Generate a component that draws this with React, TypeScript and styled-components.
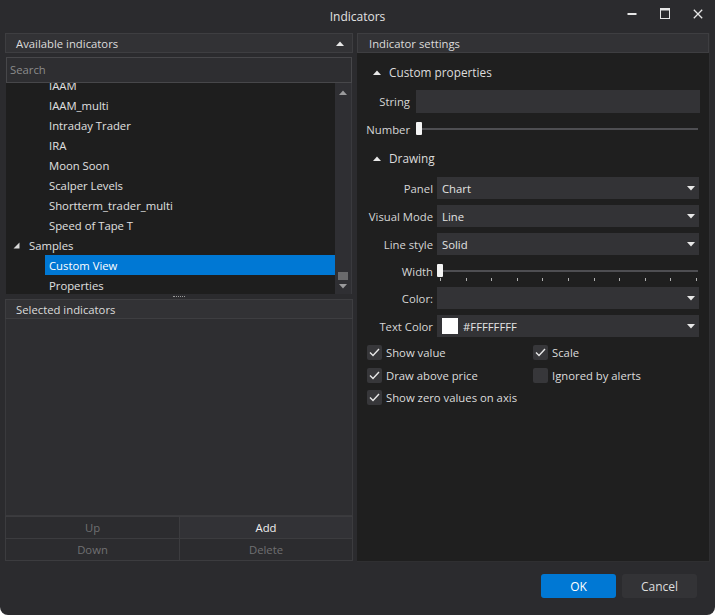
import React from "react";
import styled, { createGlobalStyle } from "styled-components";

const Global = createGlobalStyle`
  html, body { margin: 0; padding: 0; background: #ffffff; }
  body { font-family: "Open Sans", "Noto Sans", sans-serif; }
  * { box-sizing: border-box; }
`;

const Window = styled.div`
  width: 715px;
  height: 615px;
  background: #2b2b2e;
  display: flex;
  flex-direction: column;
  border-radius: 0 0 8px 8px;
  overflow: hidden;
  color: #dcdcdc;
  font-size: 11.3px;
  font-family: "Open Sans", "Noto Sans", sans-serif;
`;

const TitleBar = styled.div`
  height: 33px;
  flex: none;
  display: grid;
  grid-template-columns: 1fr auto 1fr;
  align-items: center;
`;

const Title = styled.div`
  grid-column: 2;
  font-size: 12px;
  color: #e2e2e2;
`;

const Controls = styled.div`
  grid-column: 3;
  justify-self: end;
  display: flex;
  padding-right: 1px;
  height: 33px;
`;

const CtrlButton = styled.div`
  width: 33px;
  height: 27px;
  display: flex;
  align-items: center;
  justify-content: center;
`;

const Body = styled.div`
  height: 529px;
  flex: none;
  display: flex;
  gap: 4px;
  padding: 0 5px;
`;

const LeftPane = styled.div`
  width: 348px;
  display: flex;
  flex-direction: column;
`;

const PanelHeader = styled.div<{ $pl?: number }>`
  height: 20px;
  flex: none;
  background: #323235;
  border: 1px solid #3e3e41;
  display: flex;
  align-items: center;
  justify-content: space-between;
  padding: 0 8px 0 ${(p) => p.$pl ?? 10}px;
  color: #dcdcdc;
`;

const SearchBox = styled.div`
  margin: 4px 1px 0;
  height: 26px;
  flex: none;
  background: #2e2e31;
  border: 1px solid #47474a;
  display: flex;
  align-items: center;
  padding: 0 0 2px 3px;
  color: #8c8c8c;
`;

const Tree = styled.div`
  margin: 0 1px;
  height: 211px;
  flex: none;
  display: flex;
  background: #1e1e1e;
`;

const TreeViewport = styled.div`
  flex: 1;
  overflow: hidden;
`;

const TreeInner = styled.div`
  margin-top: -8px;
`;

const Row = styled.div<{ $level: number }>`
  height: 20px;
  display: flex;
  align-items: stretch;
  padding-left: ${(p) => p.$level * 20 + 5}px;
`;

const Expander = styled.div`
  width: 14px;
  display: flex;
  align-items: center;
  padding-left: 2px;
`;

const RowLabel = styled.div<{ $selected?: boolean }>`
  flex: 1;
  display: flex;
  align-items: center;
  padding-left: 4px;
  color: ${(p) => (p.$selected ? "#ffffff" : "#e0e0e0")};
  background: ${(p) => (p.$selected ? "#0078d4" : "transparent")};
`;

const ScrollBar = styled.div`
  width: 17px;
  background: #2f2f33;
  border-right: 1px solid #3a3a3e;
  display: flex;
  flex-direction: column;
  align-items: center;
  padding: 7px 0 5px;
`;

const ScrollTrack = styled.div`
  flex: 1;
  display: flex;
  flex-direction: column;
  justify-content: flex-end;
  padding-bottom: 4px;
`;

const ScrollThumb = styled.div`
  width: 10px;
  height: 8px;
  background: #6a6a6c;
`;

const Splitter = styled.div`
  height: 5px;
  flex: none;
  display: flex;
  align-items: center;
  justify-content: center;
`;

const Grip = styled.div`
  width: 12px;
  border-top: 1px dotted #9a9a9a;
`;

const SelectedList = styled.div`
  flex: 1;
  background: #2e2e31;
  border: 1px solid #3a3a3d;
  border-top: none;
`;

const ButtonGrid = styled.div`
  display: grid;
  grid-template-columns: 173px 1fr;
  grid-auto-rows: 22px;
  border: 1px solid #3c3c3f;
  border-top: none;
  margin-bottom: 1px;
`;

const GridButton = styled.div<{ $enabled?: boolean }>`
  display: flex;
  align-items: center;
  justify-content: center;
  border-top: 1px solid #3c3c3f;
  border-left: 1px solid #3c3c3f;
  color: ${(p) => (p.$enabled ? "#f0f0f0" : "#707072")};
  background: ${(p) => (p.$enabled ? "#323236" : "#2c2c2f")};
  &:nth-child(odd) { border-left: none; }
`;

const RightPane = styled.div`
  width: 353px;
  display: flex;
  flex-direction: column;
  background: #1f1f1f;
  border-right: 1px solid #2f2f31;
  border-bottom: 1px solid #2f2f31;
`;

const Content = styled.div`
  display: flex;
  flex-direction: column;
  padding: 0 10px 0 10px;
`;

const SectionHeader = styled.div<{ $mt: number }>`
  margin-top: ${(p) => p.$mt}px;
  height: 20px;
  display: flex;
  align-items: center;
  gap: 8px;
  padding-left: 6px;
  color: #dcdcdc;
  font-size: 11.8px;
`;

const FormGrid = styled.div<{ $label: number; $gap: number; $mt: number }>`
  margin-top: ${(p) => p.$mt}px;
  display: grid;
  grid-template-columns: ${(p) => p.$label}px 1fr;
  column-gap: ${(p) => p.$gap}px;
  row-gap: 6px;
`;

const Label = styled.div`
  justify-self: end;
  align-self: center;
  white-space: nowrap;
  color: #d6d6d6;
`;

const TextInput = styled.div`
  height: 23px;
  background: #333336;
  margin-right: -1px;
`;

const Select = styled.div`
  height: 22px;
  background: #333336;
  display: flex;
  align-items: center;
  padding: 0 4px 0 5px;
  gap: 5px;
  color: #e4e4e4;
`;

const SelectValue = styled.div`
  flex: 1;
  display: flex;
  align-items: center;
  gap: 5px;
`;

const Swatch = styled.div`
  width: 16px;
  height: 16px;
  background: #ffffff;
`;

const SliderWrap = styled.div`
  height: 20px;
  display: flex;
  flex-direction: column;
  padding-top: 3px;
`;

const SliderLine = styled.div`
  display: flex;
  align-items: center;
  height: 13px;
  padding-right: 1px;
`;

const Thumb = styled.div`
  width: 6px;
  height: 13px;
  background: #f4f4f4;
  border-radius: 1px;
`;

const Track = styled.div`
  flex: 1;
  height: 2px;
  background: #4e4e52;
`;

const Ticks = styled.div`
  display: flex;
  justify-content: space-between;
  padding: 1px 2px 0 3px;
`;

const Tick = styled.div`
  width: 1px;
  height: 3px;
  background: #b0b0b0;
`;

const CheckGrid = styled.div`
  margin-top: 8px;
  display: grid;
  grid-template-columns: 166px 1fr;
  grid-auto-rows: 15px;
  row-gap: 7.5px;
`;

const CheckItem = styled.div`
  display: flex;
  align-items: center;
  gap: 4px;
  color: #dcdcdc;
`;

const Box = styled.div`
  width: 15px;
  height: 15px;
  background: #37373a;
  border-radius: 2px;
  display: flex;
  align-items: center;
  justify-content: center;
`;

const Footer = styled.div`
  flex: 1;
  display: flex;
  justify-content: flex-end;
  align-items: flex-start;
  gap: 6px;
  padding: 12px 18px 0 0;
`;

const DialogButton = styled.div<{ $primary?: boolean }>`
  width: 75px;
  height: 24px;
  border-radius: 3px;
  display: flex;
  align-items: center;
  justify-content: center;
  font-size: 12px;
  background: ${(p) => (p.$primary ? "#0078d4" : "#333336")};
  color: ${(p) => (p.$primary ? "#ffffff" : "#dedede")};
`;

const CaretUp = ({ color = "#e8e8e8" }: { color?: string }) => (
  <svg width="8" height="5" viewBox="0 0 8 5">
    <polygon points="0,5 4,0.5 8,5" fill={color} />
  </svg>
);

const CaretDown = ({ color = "#e8e8e8" }: { color?: string }) => (
  <svg width="8" height="5" viewBox="0 0 8 5">
    <polygon points="0,0 8,0 4,4.5" fill={color} />
  </svg>
);

const Expanded = () => (
  <svg width="7" height="7" viewBox="0 0 7 7">
    <polygon points="6.5,0.5 6.5,6.5 0.5,6.5" fill="#d8d8d8" />
  </svg>
);

const Check = () => (
  <svg width="11" height="9" viewBox="0 0 11 9">
    <polyline points="1,4.5 4,7.5 10,1" fill="none" stroke="#e8e8e8" strokeWidth="1.4" />
  </svg>
);

const Slider = ({ ticks }: { ticks?: number }) => (
  <SliderWrap>
    <SliderLine>
      <Thumb />
      <Track />
    </SliderLine>
    {ticks ? (
      <Ticks>
        {Array.from({ length: ticks }).map((_, i) => (
          <Tick key={i} />
        ))}
      </Ticks>
    ) : null}
  </SliderWrap>
);

const SelectBox = ({ children }: { children?: React.ReactNode }) => (
  <Select>
    <SelectValue>{children}</SelectValue>
    <CaretDown />
  </Select>
);

const CheckBox = ({ checked, label }: { checked: boolean; label: string }) => (
  <CheckItem>
    <Box>{checked ? <Check /> : null}</Box>
    {label}
  </CheckItem>
);

const treeItems: { text: string; level: number; expanded?: boolean; selected?: boolean }[] = [
  { text: "IAAM", level: 1 },
  { text: "IAAM_multi", level: 1 },
  { text: "Intraday Trader", level: 1 },
  { text: "IRA", level: 1 },
  { text: "Moon Soon", level: 1 },
  { text: "Scalper Levels", level: 1 },
  { text: "Shortterm_trader_multi", level: 1 },
  { text: "Speed of Tape T", level: 1 },
  { text: "Samples", level: 0, expanded: true },
  { text: "Custom View", level: 1, selected: true },
  { text: "Properties", level: 1 },
];

export default function App() {
  return (
    <Window>
      <Global />
      <TitleBar>
        <Title>Indicators</Title>
        <Controls>
          <CtrlButton>
            <svg width="10" height="10" viewBox="0 0 10 10">
              <rect x="0.5" y="4" width="9" height="2" fill="#e6e6e6" />
            </svg>
          </CtrlButton>
          <CtrlButton>
            <svg width="10" height="11" viewBox="0 0 10 11">
              <rect x="0.5" y="0.5" width="9" height="10" fill="none" stroke="#e6e6e6" strokeWidth="1" />
              <rect x="0.5" y="0.5" width="9" height="2" fill="#e6e6e6" />
            </svg>
          </CtrlButton>
          <CtrlButton>
            <svg width="10" height="10" viewBox="0 0 10 10">
              <path d="M0.8 0.8 L9.2 9.2 M9.2 0.8 L0.8 9.2" stroke="#e6e6e6" strokeWidth="1.3" />
            </svg>
          </CtrlButton>
        </Controls>
      </TitleBar>
      <Body>
        <LeftPane>
          <PanelHeader>
            Available indicators
            <CaretUp />
          </PanelHeader>
          <SearchBox>Search</SearchBox>
          <Tree>
            <TreeViewport>
              <TreeInner>
                {treeItems.map((it) => (
                  <Row key={it.text} $level={it.level}>
                    <Expander>{it.expanded ? <Expanded /> : null}</Expander>
                    <RowLabel $selected={it.selected}>{it.text}</RowLabel>
                  </Row>
                ))}
              </TreeInner>
            </TreeViewport>
            <ScrollBar>
              <CaretUp color="#9a9a9c" />
              <ScrollTrack>
                <ScrollThumb />
              </ScrollTrack>
              <CaretDown color="#9a9a9c" />
            </ScrollBar>
          </Tree>
          <Splitter>
            <Grip />
          </Splitter>
          <PanelHeader>Selected indicators</PanelHeader>
          <SelectedList />
          <ButtonGrid>
            <GridButton>Up</GridButton>
            <GridButton $enabled>Add</GridButton>
            <GridButton>Down</GridButton>
            <GridButton>Delete</GridButton>
          </ButtonGrid>
        </LeftPane>
        <RightPane>
          <PanelHeader $pl={11}>Indicator settings</PanelHeader>
          <Content>
            <SectionHeader $mt={9}>
              <CaretUp />
              Custom properties
            </SectionHeader>
            <FormGrid $label={43} $gap={6} $mt={8}>
              <Label>String</Label>
              <TextInput />
              <Label>Number</Label>
              <Slider />
            </FormGrid>
            <SectionHeader $mt={9}>
              <CaretUp />
              Drawing
            </SectionHeader>
            <FormGrid $label={66} $gap={4} $mt={9}>
              <Label>Panel</Label>
              <SelectBox>Chart</SelectBox>
              <Label>Visual Mode</Label>
              <SelectBox>Line</SelectBox>
              <Label>Line style</Label>
              <SelectBox>Solid</SelectBox>
              <Label>Width</Label>
              <Slider ticks={11} />
              <Label>Color:</Label>
              <SelectBox />
              <Label>Text Color</Label>
              <SelectBox>
                <Swatch />
                #FFFFFFFF
              </SelectBox>
            </FormGrid>
            <CheckGrid>
              <CheckBox checked label="Show value" />
              <CheckBox checked label="Scale" />
              <CheckBox checked label="Draw above price" />
              <CheckBox checked={false} label="Ignored by alerts" />
              <CheckBox checked label="Show zero values on axis" />
            </CheckGrid>
          </Content>
        </RightPane>
      </Body>
      <Footer>
        <DialogButton $primary>OK</DialogButton>
        <DialogButton>Cancel</DialogButton>
      </Footer>
    </Window>
  );
}
